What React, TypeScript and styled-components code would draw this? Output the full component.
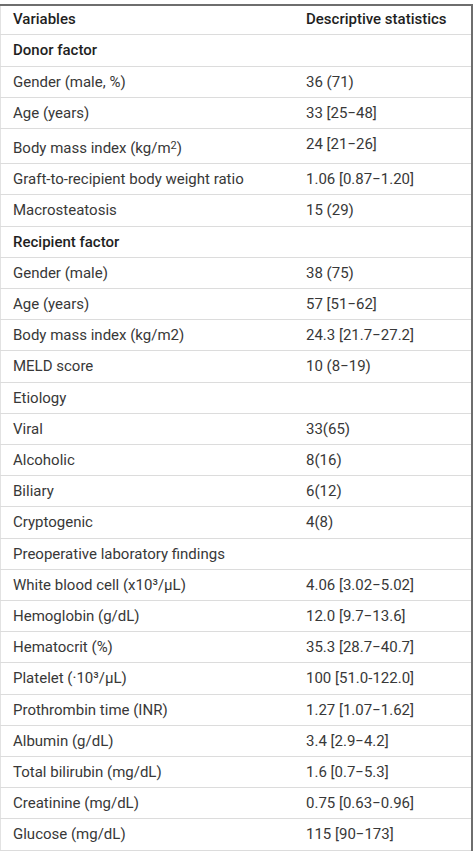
import React from "react";
import styled, { createGlobalStyle } from "styled-components";

const GlobalStyle = createGlobalStyle`
  html, body {
    margin: 0;
    padding: 0;
    background: #ffffff;
  }
  body {
    font-family: Roboto, "Liberation Sans", Arial, sans-serif;
  }
`;

const Page = styled.div`
  width: 474px;
  display: flex;
  flex-direction: column;
`;

const Caption = styled.div`
  height: 4px;
  overflow: hidden;
  display: flex;
  justify-content: center;
  align-items: flex-end;
  color: #c4c4c4;
  font-size: 15px;
  line-height: 18px;
  letter-spacing: 0.4px;
`;

const Table = styled.table`
  width: 473px;
  border-collapse: collapse;
  border-top: 2px solid #6e6e6e;
  border-right: 2px solid #6e6e6e;
  border-left: 1px solid #e2e2e2;
  font-size: 15px;
  color: #383838;
`;

const Row = styled.tr`
  border-bottom: 1px solid #dcdcdc;
`;

const Cell = styled.td<{ $strong?: boolean; $first?: boolean }>`
  padding: 4px 12px;
  line-height: 22.2px;
  vertical-align: top;
  text-align: left;
  width: ${(p) => (p.$first ? "269px" : "auto")};
  font-weight: ${(p) => (p.$strong ? 500 : 400)};
  color: ${(p) => (p.$strong ? "#1f1f1f" : "#383838")};
  white-space: nowrap;
`;

const HeadCell = styled.th<{ $first?: boolean }>`
  padding: 2px 12px 4px;
  line-height: 22.4px;
  text-align: left;
  font-weight: 500;
  color: #1f1f1f;
  width: ${(p) => (p.$first ? "269px" : "auto")};
`;

const Sup = styled.sup`
  font-size: 11px;
  line-height: 26px;
  vertical-align: 4px;
`;

type R = { label: React.ReactNode; value?: string; strong?: boolean };

const rows: R[] = [
  { label: "Donor factor", strong: true },
  { label: "Gender (male, %)", value: "36 (71)" },
  { label: "Age (years)", value: "33 [25\u221248]" },
  {
    label: (
      <>
        Body mass index (kg/m<Sup>2</Sup>)
      </>
    ),
    value: "24 [21\u221226]",
  },
  { label: "Graft-to-recipient body weight ratio", value: "1.06 [0.87\u22121.20]" },
  { label: "Macrosteatosis", value: "15 (29)" },
  { label: "Recipient factor", strong: true },
  { label: "Gender (male)", value: "38 (75)" },
  { label: "Age (years)", value: "57 [51\u221262]" },
  { label: "Body mass index (kg/m2)", value: "24.3 [21.7\u221227.2]" },
  { label: "MELD score", value: "10 (8\u221219)" },
  { label: "Etiology" },
  { label: "Viral", value: "33(65)" },
  { label: "Alcoholic", value: "8(16)" },
  { label: "Biliary", value: "6(12)" },
  { label: "Cryptogenic", value: "4(8)" },
  { label: "Preoperative laboratory findings" },
  { label: "White blood cell (x10\u00b3/\u00b5L)", value: "4.06 [3.02\u22125.02]" },
  { label: "Hemoglobin (g/dL)", value: "12.0 [9.7\u221213.6]" },
  { label: "Hematocrit (%)", value: "35.3 [28.7\u221240.7]" },
  { label: "Platelet (\u00b710\u00b3/\u00b5L)", value: "100 [51.0-122.0]" },
  { label: "Prothrombin time (INR)", value: "1.27 [1.07\u22121.62]" },
  { label: "Albumin (g/dL)", value: "3.4 [2.9\u22124.2]" },
  { label: "Total bilirubin (mg/dL)", value: "1.6 [0.7\u22125.3]" },
  { label: "Creatinine (mg/dL)", value: "0.75 [0.63\u22120.96]" },
  { label: "Glucose (mg/dL)", value: "115 [90\u2212173]" },
];

export default function App() {
  return (
    <>
      <GlobalStyle />
      <Page>
        <Caption>Patient characteristics</Caption>
        <Table>
          <thead>
            <Row>
              <HeadCell $first>Variables</HeadCell>
              <HeadCell>Descriptive statistics</HeadCell>
            </Row>
          </thead>
          <tbody>
            {rows.map((r, i) => (
              <Row key={i}>
                <Cell $first $strong={r.strong}>
                  {r.label}
                </Cell>
                <Cell>{r.value ?? ""}</Cell>
              </Row>
            ))}
          </tbody>
        </Table>
      </Page>
    </>
  );
}
